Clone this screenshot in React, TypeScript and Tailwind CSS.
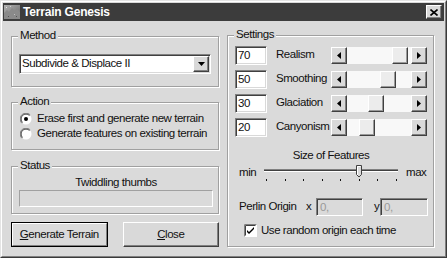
import React from "react";

const raised =
  "bg-[#d9d9d9] border border-t-white border-l-white border-r-[#404040] border-b-[#404040] shadow-[inset_-1px_-1px_0_#808080]";
const sunken =
  "border border-t-[#808080] border-l-[#808080] border-r-white border-b-white shadow-[inset_1px_1px_0_#404040,inset_-1px_-1px_0_#d9d9d9]";

function Group({ label, className, children }: { label: string; className?: string; children?: React.ReactNode }) {
  return (
    <div className={`relative border border-[#a0a0a0] shadow-[inset_1px_1px_0_#fff,1px_1px_0_#fff] ${className ?? ""}`}>
      <span className="absolute left-[6px] top-[-8px] bg-[#dadada] px-[2px] leading-[13px]">{label}</span>
      {children}
    </div>
  );
}

function Arrow({ dir }: { dir: "left" | "right" | "down" }) {
  return (
    <div className={`w-[16px] h-full flex items-center justify-center ${raised}`}>
      {dir === "left" && (
        <svg width="4" height="7" viewBox="0 0 4 7"><path d="M4 0 L0 3.5 L4 7 Z" fill="#000" /></svg>
      )}
      {dir === "right" && (
        <svg width="4" height="7" viewBox="0 0 4 7"><path d="M0 0 L4 3.5 L0 7 Z" fill="#000" /></svg>
      )}
      {dir === "down" && (
        <svg width="7" height="4" viewBox="0 0 7 4"><path d="M0 0 L7 0 L3.5 4 Z" fill="#000" /></svg>
      )}
    </div>
  );
}

function HScroll({ thumb }: { thumb: number }) {
  return (
    <div className="flex w-[96px] h-[17px]">
      <Arrow dir="left" />
      <div className="relative flex-1 bg-[#f8f8f8]">
        <div
          style={{ left: thumb }}
          className="absolute top-0 h-full w-[16px] bg-[#ececec] border border-t-white border-l-white border-r-[#404040] border-b-[#404040] shadow-[inset_-1px_-1px_0_#9a9a9a]"
        />
      </div>
      <Arrow dir="right" />
    </div>
  );
}

function Radio({ checked }: { checked?: boolean }) {
  return (
    <svg width="12" height="12" viewBox="0 0 12 12">
      <circle cx="6" cy="6" r="5.5" fill="#fff" />
      <path d="M10.2 1.8 A5.5 5.5 0 0 0 1.8 10.2" stroke="#808080" strokeWidth="1" fill="none" />
      <path d="M9.5 2.5 A4.5 4.5 0 0 0 2.5 9.5" stroke="#404040" strokeWidth="1" fill="none" />
      {checked && <circle cx="6" cy="6" r="2" fill="#000" />}
    </svg>
  );
}

function Row({ value, label, thumb }: { value: string; label: string; thumb: number }) {
  return (
    <div className="flex items-center h-[24px]">
      <div className={`w-[32px] h-[19px] bg-white pl-[2px] leading-[17px] ${sunken}`}>{value}</div>
      <span className="ml-[9px] w-[55px]">{label}</span>
      <HScroll thumb={thumb} />
    </div>
  );
}

export default function App() {
  const ticks = [0, 1, 2, 3, 4, 5, 6, 7];
  return (
    <div className="w-[447px] h-[258px] bg-[#dadada] border border-[#e4e4e4] border-r-[#3a3a3a] border-b-[#3a3a3a] font-['Liberation_Sans',Arial,sans-serif] text-[11.5px] tracking-[-0.45px] whitespace-nowrap text-[#111]">
      <div className="h-full border border-white border-r-[#808080] border-b-[#808080] p-[1px] flex flex-col">
        {/* title bar */}
        <div className="h-[18px] bg-[#3c3c3c] flex items-center">
          <svg width="16" height="16" viewBox="0 0 16 16" className="ml-[1px]">
            <defs>
              <linearGradient id="tg" x1="0" y1="0" x2="1" y2="1">
                <stop offset="0" stopColor="#b0b0b0" />
                <stop offset="1" stopColor="#6a6a6a" />
              </linearGradient>
            </defs>
            <rect x="0" y="1" width="16" height="14" fill="url(#tg)" />
            <path d="M0 9 L3 6 L5 8 L8 4 L11 7 L13 5 L16 8 L16 15 L0 15 Z" fill="#8a8a8a" />
            <rect x="2" y="3" width="1" height="1" fill="#e0e0e0" />
            <rect x="6" y="2" width="1" height="1" fill="#d0d0d0" />
            <rect x="10" y="10" width="1" height="1" fill="#c0c0c0" />
            <rect x="4" y="12" width="1" height="1" fill="#555" />
            <rect x="12" y="12" width="1" height="1" fill="#555" />
          </svg>
          <span className="ml-[3px] text-white font-bold text-[12px] tracking-[-0.2px] leading-[18px]">Terrain Genesis</span>
          <div className={`ml-auto mr-[2px] w-[16px] h-[14px] flex items-center justify-center ${raised}`}>
            <svg width="8" height="7" viewBox="0 0 8 7">
              <path d="M0.5 0.5 L7.5 6.5 M7.5 0.5 L0.5 6.5" stroke="#000" strokeWidth="1.6" />
            </svg>
          </div>
        </div>

        {/* body */}
        <div className="flex pl-[8px] pt-[14px] gap-[8px]">
          {/* left column */}
          <div className="w-[208px] flex flex-col pt-[1px]">
            <Group label="Method" className="h-[51px] pt-[17px] px-[7px]">
              <div className={`h-[20px] bg-white flex items-center pl-[2px] pr-[1px] ${sunken}`}>
                <span className="flex-1">Subdivide &amp; Displace II</span>
                <div className="h-[16px]">
                  <Arrow dir="down" />
                </div>
              </div>
            </Group>

            <Group label="Action" className="mt-[15px] h-[48px] pt-[8px] pl-[8px]">
              <div className="flex items-center h-[15px]">
                <Radio checked />
                <span className="ml-[5px]">Erase first and generate new terrain</span>
              </div>
              <div className="flex items-center h-[15px]">
                <Radio />
                <span className="ml-[5px]">Generate features on existing terrain</span>
              </div>
            </Group>

            <Group label="Status" className="mt-[16px] h-[48px] pt-[9px]">
              <div className="text-center leading-[13px] pl-[2px]">Twiddling thumbs</div>
              <div className="ml-[7px] mt-[1px] w-[194px] h-[17px] border border-[#a0a0a0] border-r-white border-b-white" />
            </Group>

            <div className="mt-[8px] flex gap-[15px]">
              <div className="w-[97px] h-[25px] border border-black">
                <div className="h-full border border-t-white border-l-white border-r-[#808080] border-b-[#808080] flex items-center justify-center">
                  <span><span className="underline">G</span>enerate Terrain</span>
                </div>
              </div>
              <div className={`w-[97px] h-[25px] flex items-center justify-center ${raised}`}>
                <span><span className="underline">C</span>lose</span>
              </div>
            </div>
          </div>

          {/* right column */}
          <Group label="Settings" className="w-[207px] h-[212px] pt-[7px] pl-[7px]">
            <Row value="70" label="Realism" thumb={45} />
            <Row value="50" label="Smoothing" thumb={33} />
            <Row value="30" label="Glaciation" thumb={21} />
            <Row value="20" label="Canyonism" thumb={12} />

            <div className="mt-[10px] text-center leading-[13px] pr-[6px]">Size of Features</div>
            <div className="mt-[3px] flex items-start pl-[4px]">
              <span className="w-[22px] leading-[12px] mt-[1px]">min</span>
              <svg width="142" height="20" viewBox="0 0 142 20">
                <rect x="3" y="4" width="134" height="1" fill="#808080" />
                <rect x="3" y="5" width="134" height="1" fill="#404040" />
                <rect x="3" y="6" width="134" height="1" fill="#fff" />
                <path d="M95.5 0.5 L100.5 0.5 L100.5 9.5 L98 12 L95.5 9.5 Z" fill="#d9d9d9" stroke="#404040" strokeWidth="1" />
                <path d="M96.5 10 L96.5 1.5 L99.5 1.5" stroke="#fff" strokeWidth="1" fill="none" />
                {ticks.map((i) => (
                  <rect key={i} x={Math.round(5 + i * 18.57)} y="14" width="1" height="2" fill="#111" />
                ))}
              </svg>
              <span className="ml-[3px] leading-[12px] mt-[1px]">max</span>
            </div>

            <div className="mt-[13px] flex items-center h-[18px] pl-[4px]">
              <span className="w-[67px]">Perlin Origin</span>
              <span className="w-[10px]">x</span>
              <div className={`w-[47px] h-[18px] pl-[3px] leading-[16px] text-[#999] ${sunken}`}>0,</div>
              <span className="ml-[11px] w-[5px]">y</span>
              <div className={`ml-[1px] w-[48px] h-[18px] pl-[3px] leading-[16px] text-[#999] ${sunken}`}>0,</div>
            </div>

            <div className="mt-[8px] flex items-center h-[13px] pl-[9px]">
              <svg width="13" height="13" viewBox="0 0 13 13">
                <rect x="0" y="0" width="13" height="13" fill="#fff" />
                <path d="M0.5 12.5 L0.5 0.5 L12.5 0.5" stroke="#808080" fill="none" />
                <path d="M1.5 11.5 L1.5 1.5 L11.5 1.5" stroke="#404040" fill="none" />
                <path d="M3 6 L5 8 L10 3 L10 5 L5 10 L3 8 Z" fill="#000" />
              </svg>
              <span className="ml-[4px]">Use random origin each time</span>
            </div>
          </Group>
        </div>
      </div>
    </div>
  );
}
